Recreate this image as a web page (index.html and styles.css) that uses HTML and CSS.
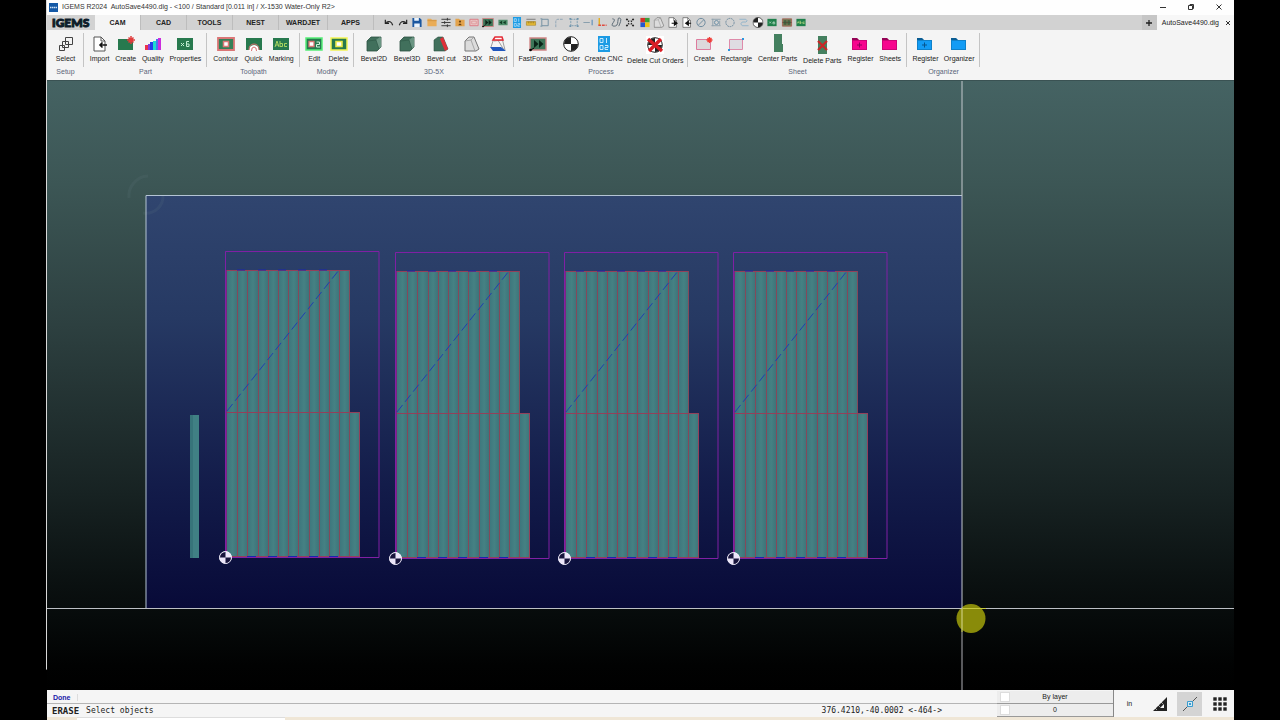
FILE: index.html
```html
<!DOCTYPE html>
<html lang="en">
<head>
<meta charset="utf-8">
<title>IGEMS R2024</title>
<link rel="stylesheet" href="styles.css">
</head>
<body>
<svg class="defs" width="0" height="0" aria-hidden="true">
  <defs>
    <symbol id="folder" viewBox="0 0 18 16"><path d="M1 2h5l2 2h8v10H1z" fill="currentColor"/><path d="M1 4V2h5l2 2z" fill="#000" opacity=".4"/><path d="M1.5 4.5h14v9h-14z" fill="none" stroke="#000" stroke-opacity=".25" stroke-width=".7"/></symbol>
    <symbol id="order" viewBox="0 0 16 16"><circle cx="8" cy="8" r="7.3" fill="#fff" stroke="#222" stroke-width="1"/><path d="M8 8V1a7 7 0 0 0-7 7zM8 8v7a7 7 0 0 0 7-7z" fill="#222"/></symbol>
    <symbol id="bevel" viewBox="0 0 16 16"><path d="M1 5l4-4h10v10l-4 4H1z" fill="#41705c" stroke="#2b5042" stroke-width=".8"/><path d="M10 4l4-3 1 1v9l-2 2z" fill="#6a9582"/><path d="M2 5l8-1 3 9" fill="none" stroke="#2f5948" stroke-width=".7"/></symbol>
    <symbol id="solid" viewBox="0 0 16 16"><path d="M1 5l4-4h5l5 12-3 2H1z" fill="#dcdcdc" stroke="#777" stroke-width="1"/><path d="M10 1L7 4l4 11M1 5l6-1" fill="none" stroke="#999" stroke-width=".8"/></symbol>
    <symbol id="ff" viewBox="0 0 18 16"><path d="M1 2h16v12H1z" fill="#3d7558" stroke="#d08787" stroke-width="1.4"/><path d="M5 4l4.500 4L5 12zM10 4l4.500 4L10 12z" fill="#0b2418"/><circle cx="1.500" cy="14" r="1.300" fill="#000"/><path d="M2 14l3-2" stroke="#000"/></symbol>
    <symbol id="cnc" viewBox="0 0 12 16"><path d="M0 0h12v16H0z" fill="#1c9be4"/><path d="M2 2.500h3v4H2zM8.500 2v5M2 9.500h3v4H2zM7 9.500h3v2H7v2h3" fill="none" stroke="#d9f1ff" stroke-width=".9"/></symbol>
    <symbol id="page" viewBox="0 0 14 16"><path d="M1 1h7l4 4v10H1z" fill="#fff" stroke="#555"/><path d="M8 1v4h4" fill="none" stroke="#555"/></symbol>
    <linearGradient id="slat" gradientUnits="userSpaceOnUse" x1="227" x2="237.200" y1="0" y2="0" spreadMethod="repeat"><stop offset="0" stop-color="#3c757c"/><stop offset=".55" stop-color="#458183"/><stop offset="1" stop-color="#3e747a"/></linearGradient>
    <linearGradient id="sheet" x1="0" y1="0" x2="0" y2="1"><stop offset="0" stop-color="#30456f"/><stop offset=".3" stop-color="#263963"/><stop offset=".7" stop-color="#131c4a"/><stop offset="1" stop-color="#080a38"/></linearGradient>
    <g id="datum"><circle cx="225.500" cy="557.500" r="6" fill="#ece6fa" stroke="#f5f2ff"/><path d="M225.500 557.500v-5.500a5.500 5.500 0 0 0-5.500 5.500zM225.500 557.500v5.500a5.500 5.500 0 0 0 5.500-5.500z" fill="#17143c"/></g>
    <g id="part" fill="none">
      <path d="M227 270h122v143h11v144H227z" fill="url(#slat)"/>
      <path d="M237.500 270v287M247.500 270v287M258.500 270v287M268.500 270v287M278.500 270v287M288.500 270v287M298.500 270v287M309.500 270v287M319.500 270v287M329.500 270v287M339.500 270v287M349.500 270v287" stroke="#84495a"/>
      <path d="M227 270.500h122M227 412.500h133M359.500 413v144M227 556.500h133" stroke="#93405a"/>
      <path d="M237 270h8M258 270h8M278 270h8M298 270h8M319 270h8M247 556.500h9M268 556.500h9M288 556.500h9M309 556.500h9M329 556.500h9" stroke="#1b25b0"/>
      <path d="M225.500 251.500h153.500v306h-153.500z" stroke="#8020a4"/>
      <path d="M226.500 270v287" stroke="#7b257f"/>
      <path d="M227 411L339 270" stroke="#203fb0" stroke-dasharray="9 4"/>
    </g>
  </defs>
</svg>
<div class="app">
  <header class="titlebar">
    <svg class="logo-mark" viewBox="0 0 9 9"><path d="M0 0h9v9H0z" fill="#1559a6"/><path d="M1 4.500h7" stroke="#cfe2f5" stroke-width="1.500" stroke-dasharray="1.500 .5"/></svg>
    <h1 class="title">IGEMS R2024&nbsp; AutoSave4490.dig - &lt;100 / Standard [0.011 in] / X-1530 Water-Only R2&gt;</h1>
    <div class="window-controls">
      <button aria-label="Minimize"><svg viewBox="0 0 8 8"><path d="M1 4.500h6"/></svg></button>
      <button aria-label="Restore"><svg viewBox="0 0 8 8"><path d="M1.500 2.500h4v4h-4zM3 2.500v-1h3.500v4h-1"/></svg></button>
      <button aria-label="Close"><svg viewBox="0 0 8 8"><path d="M1.500 1.500l5 5M6.500 1.500l-5 5"/></svg></button>
    </div>
  </header>

  <nav class="tabbar">
    <span class="brand">IGEMS</span>
    <button class="tab tab-active">CAM</button><button class="tab">CAD</button><button class="tab">TOOLS</button><button class="tab">NEST</button><button class="tab tab-wide">WARDJET</button><button class="tab">APPS</button>
    <div class="quickbar">
      <button aria-label="Undo"><svg viewBox="0 0 12 12"><path d="M3 6c3-2 6-1 7 3M2 3v4h4" fill="none" stroke="#222" stroke-width="1.300"/></svg></button>
      <button aria-label="Redo"><svg viewBox="0 0 12 12"><path d="M9 6C6 4 3 5 2 9M10 3v4H6" fill="none" stroke="#222" stroke-width="1.300"/></svg></button>
      <button aria-label="Save"><svg viewBox="0 0 12 12"><path d="M1 1h8l2 2v8H1z" fill="#1a57a0"/><path d="M3 1h5v3H3zM3 7h6v4H3z" fill="#e9f2fb"/></svg></button>
      <button aria-label="Open"><svg viewBox="0 0 12 12"><path d="M1 2h4l1 1h5v7H1z" fill="#e9ac57"/><path d="M1 4h10" stroke="#c98b38" stroke-width=".7"/></svg></button>
      <button aria-label="Settings"><svg viewBox="0 0 12 12"><path d="M1 2.500h10M1 6h10M1 9.500h10M7.500 1v3M4.500 4.500v3M7.500 8v3" stroke="#333"/></svg></button>
      <button aria-label="User folder"><svg viewBox="0 0 12 12"><path d="M1 2h4l1 1h5v7H1z" fill="#e3a34c"/><circle cx="6" cy="5" r="1.200" fill="#6b4310"/><path d="M4 9q2-4 4 0z" fill="#6b4310"/></svg></button>
      <button aria-label="Plate"><svg viewBox="0 0 12 12"><path d="M1.500 2.500h9v7h-9z" fill="#eccaca" stroke="#dc7781"/><path d="M3.500 4.500h5v3h-5z" fill="none" stroke="#d99"/></svg></button>
      <button aria-label="Fast forward"><svg viewBox="0 0 18 16"><use href="#ff"/></svg></button>
      <button aria-label="Rewind"><svg viewBox="0 0 12 12"><path d="M1 3h10v6H1z" fill="#4d8c69"/><path d="M5 4L2 6l3 2zM9 4L6 6l3 2z" fill="#103a22"/></svg></button>
      <button aria-label="CNC"><svg viewBox="0 0 12 16"><use href="#cnc"/></svg></button>
      <button aria-label="Measure"><svg viewBox="0 0 12 12"><path d="M1 2.500h10" stroke="#777"/><path d="M1 5h10v4H1z" fill="#e9bd37" stroke="#a88422" stroke-width=".7"/><path d="M3 5v2M5 5v2M7 5v2M9 5v2" stroke="#765c14" stroke-width=".7"/></svg></button>
      <button aria-label="Rectangle"><svg viewBox="0 0 12 12"><path d="M2.500 2.500h7v7h-7zM1 2h2M1 10h2" fill="none" stroke="#6e8ca0"/></svg></button>
      <button aria-label="Corner"><svg viewBox="0 0 12 12"><path d="M2.500 11V5q0-2.500 2.500-2.500h6" fill="none" stroke="#8ba2b5" stroke-dasharray="3 1"/></svg></button>
      <button aria-label="Group"><svg viewBox="0 0 12 12"><path d="M2.500 2.500h7v7h-7z" fill="none" stroke="#7799ae" stroke-dasharray="2 1"/><path d="M1 1h2v2H1zM9 1h2v2H9zM1 9h2v2H1zM9 9h2v2H9z" fill="#6d93ab"/></svg></button>
      <button aria-label="Extend"><svg viewBox="0 0 12 12"><path d="M1 6h7" stroke="#829aaa"/><path d="M10.500 3v6" stroke="#4380b4"/></svg></button>
      <button aria-label="Origin"><svg viewBox="0 0 12 12"><path d="M3 1v8" stroke="#e6ac17" stroke-width="1.500"/><path d="M2 9h9" stroke="#df4b3f" stroke-width="1.500" stroke-dasharray="3 1"/></svg></button>
      <button aria-label="Spline"><svg viewBox="0 0 12 12"><path d="M2 2q4 0 1 4t1 4 4-5 2-4 1 4-2 5" fill="none" stroke="#53636e"/></svg></button>
      <button aria-label="Zoom extents"><svg viewBox="0 0 12 12"><path d="M2 2l3 3M10 2L7 5M2 10l3-3M10 10L7 7" stroke="#222" stroke-width="1.800" stroke-dasharray="2 1"/></svg></button>
      <button aria-label="Colors"><svg viewBox="0 0 12 12"><path d="M1 1h5v5H1z" fill="#d23128"/><path d="M6 1h5v5H6z" fill="#3b9f38"/><path d="M1 6h5v5H1z" fill="#2458cf"/><path d="M6 6h5v5H6z" fill="#f0c21a"/></svg></button>
      <button aria-label="Solid"><svg viewBox="0 0 16 16"><use href="#solid"/></svg></button>
      <button aria-label="Export"><svg viewBox="0 0 14 16"><use href="#page"/><path d="M5 9h6M9 6l4 3-4 3z" stroke="#111" stroke-width="1.500"/></svg></button>
      <button aria-label="Import page"><svg viewBox="0 0 14 16"><use href="#page"/><path d="M7 9h6M9 6L5 9l4 3z" stroke="#111" stroke-width="1.500"/></svg></button>
      <button aria-label="Circle slash"><svg viewBox="0 0 12 12"><circle cx="6" cy="6" r="4.500" fill="none" stroke="#69879b"/><path d="M3 9l6-6" stroke="#69879b"/></svg></button>
      <button aria-label="Snapshot"><svg viewBox="0 0 12 12"><path d="M1 2.500h10M1 9.500h10M2.500 2v8M10 4v5" stroke="#8b9fab"/><circle cx="6.500" cy="6" r="2.200" fill="none" stroke="#698da4"/></svg></button>
      <button aria-label="Circle"><svg viewBox="0 0 12 12"><circle cx="6" cy="6" r="4.500" fill="none" stroke="#69879b" stroke-dasharray="2 .7"/></svg></button>
      <button aria-label="Path"><svg viewBox="0 0 12 12"><path d="M1 2.500h7q3 2 0 3H4q-3 2 0 4h7" fill="none" stroke="#8fb2c9"/></svg></button>
      <button aria-label="Cut order"><svg viewBox="0 0 16 16"><use href="#order"/></svg></button>
      <button aria-label="Part properties"><svg viewBox="0 0 12 12"><path d="M1 2h10v8H1z" fill="#1f804b"/><path d="M3 5l2 2M5 5L3 7M8.500 4.500L7 6v1.500h2V6H7" fill="none" stroke="#b7dbc4" stroke-width=".8"/></svg></button>
      <button aria-label="Edit path"><svg viewBox="0 0 12 12"><path d="M1 2h10v8H1z" fill="#6f7e56" stroke="#a66556"/><path d="M3 4h2v4H3zM7 4h2v4H7zM1 6h10" fill="#367b4d" stroke="#4c4033" stroke-width=".6"/></svg></button>
      <button aria-label="Mark"><svg viewBox="0 0 12 12"><path d="M1 2h10v8H1z" fill="#1f804b"/><path d="M2 7l1-2 1 2M5 4v3h1V5.500H5M10 5.500H8V7h2" fill="none" stroke="#c0db84" stroke-width=".8"/></svg></button>
    </div>
    <div class="documents">
      <button class="new-doc" aria-label="New document"><svg viewBox="0 0 8 8"><path d="M4 1v6M1 4h6" stroke="#222" stroke-width="1.300"/></svg></button>
      <div class="doc-tab"><span>AutoSave4490.dig</span><button aria-label="Close document"><svg viewBox="0 0 8 8"><path d="M2 2l4 4M6 2L2 6"/></svg></button></div>
    </div>
  </nav>

  <div class="ribbon">
    <section class="group g-setup"><div class="tools">
      <button class="tool"><svg viewBox="0 0 16 16"><path d="M7.500 1.500h7v7h-7zM4.500 5.500h6v6h-6zM1.500 9.500h5v5h-5z" fill="#f4f4f4" stroke="#444"/></svg>Select</button>
    </div><h2>Setup</h2></section>
    <section class="group g-part"><div class="tools">
      <button class="tool"><svg viewBox="0 0 14 16"><use href="#page"/><path d="M8 9h6M9.500 6.500L7 9l2.500 2.500" fill="none" stroke="#111" stroke-width="1.600"/></svg>Import</button>
      <button class="tool"><svg viewBox="0 0 18 16"><path d="M1 3h15v11H1z" fill="#27794e"/><path d="M14 0v8M10 4h8M11.500 1.500l5 5M16.500 1.500l-5 5" stroke="#e03b3b" stroke-width="1.500"/></svg>Create</button>
      <button class="tool"><svg viewBox="0 0 18 16"><path d="M1 9h3v5H1z" fill="#ec334c"/><path d="M4 8h2v6H4z" fill="#803ce0"/><path d="M6 6h3v8H6z" fill="#233bea"/><path d="M9 5h3v9H9z" fill="#1bdccf"/><path d="M12 3h2v11h-2z" fill="#4778ee"/><path d="M14 2h3v12h-3z" fill="#cb2ddd"/></svg>Quality</button>
      <button class="tool"><svg viewBox="0 0 18 16"><path d="M1 2h16v12H1z" fill="#27794e"/><path d="M5 7l3 3M8 7l-3 3M13 5.500h-2.500v5H13V8h-2.500" fill="none" stroke="#c2efd3"/></svg>Properties</button>
    </div><h2>Part</h2></section>
    <section class="group g-toolpath"><div class="tools">
      <button class="tool"><svg viewBox="0 0 18 16"><path d="M1 2h16v12H1z" fill="#348058" stroke="#da7676" stroke-width="1.800"/><path d="M6.500 5.500h5v5h-5z" fill="#fff" stroke="#dd7777" stroke-width="1.500"/></svg>Contour</button>
      <button class="tool"><svg viewBox="0 0 18 16"><path d="M1 2h16v12H1z" fill="#27794e"/><path d="M4 15q0-6 5-6t5 6z" fill="#fff"/><path d="M4 14q0-6 5-6t5 6M6.500 15q0-4 2.500-4t2.500 4" fill="none" stroke="#d76e6e"/></svg>Quick</button>
      <button class="tool"><svg viewBox="0 0 18 16"><path d="M1 2h16v12H1z" fill="#27794e"/><path d="M3 11l2-6 2 6M4 9h2M8 5v5.500h2.500v-3H8M15 7.500h-2.500v3H15" fill="none" stroke="#a7d45f"/></svg>Marking</button>
    </div><h2>Toolpath</h2></section>
    <section class="group g-modify"><div class="tools">
      <button class="tool"><svg viewBox="0 0 18 16"><path d="M1 2h16v12H1z" fill="#27794e" stroke="#55ed77" stroke-width="1.500"/><path d="M4 5.500h5v5H4z" fill="#fff" stroke="#db7676" stroke-width="1.300"/><path d="M11.500 6h3v2.500h-3v2.500h3.500" fill="none" stroke="#d2f2dd"/></svg>Edit</button>
      <button class="tool"><svg viewBox="0 0 18 16"><path d="M1 2h16v12H1z" fill="#27794e" stroke="#f2f454" stroke-width="1.500"/><path d="M6 5.500h6v5H6z" fill="#fff" stroke="#ece949" stroke-width="1.600"/></svg>Delete</button>
    </div><h2>Modify</h2></section>
    <section class="group g-bevel"><div class="tools">
      <button class="tool"><svg viewBox="0 0 16 16"><use href="#bevel"/></svg>Bevel2D</button>
      <button class="tool"><svg viewBox="0 0 16 16"><use href="#bevel"/></svg>Bevel3D</button>
      <button class="tool"><svg viewBox="0 0 16 16"><path d="M1 4l4-3h5l5 12-3 2H1z" fill="#41705c" stroke="#2b5042" stroke-width=".6"/><path d="M7 3l3-2 5 12-3 2z" fill="#df3038"/></svg>Bevel cut</button>
      <button class="tool"><svg viewBox="0 0 16 16"><use href="#solid"/></svg>3D-5X</button>
      <button class="tool"><svg viewBox="0 0 16 16"><path d="M4 2L1 11M12 2l3 12M4 5l9-1M6 1l8 13" stroke="#777" stroke-width=".7"/><path d="M3 4l2-3h7l1 3z" fill="#fff" stroke="#e32a35" stroke-width="1.500"/><path d="M0 11h11l5 4H3z" fill="#2157bd"/></svg>Ruled</button>
    </div><h2>3D-5X</h2></section>
    <section class="group g-process"><div class="tools">
      <button class="tool"><svg viewBox="0 0 18 16"><use href="#ff"/></svg>FastForward</button>
      <button class="tool"><svg viewBox="0 0 16 16"><use href="#order"/></svg>Order</button>
      <button class="tool"><svg viewBox="0 0 12 16"><use href="#cnc"/></svg>Create CNC</button>
      <button class="tool tool-tall"><svg viewBox="0 0 18 18"><path d="M0 0h18v18H0z" fill="#fff"/><use href="#order" x="1" y="1" width="16" height="16"/><path d="M2 3l14 12M15 3L3 15" stroke="#d91f26" stroke-width="3.500"/></svg>Delete Cut Orders</button>
    </div><h2>Process</h2></section>
    <section class="group g-sheet"><div class="tools">
      <button class="tool"><svg viewBox="0 0 18 16"><path d="M1.500 3.500h14v10h-14z" fill="#ddd9dc" stroke="#de7b9d"/><path d="M14.500 1v6M11.500 4h6M12.500 2l4 4M16.500 2l-4 4" stroke="#f03e37" stroke-width="1.300"/></svg>Create</button>
      <button class="tool"><svg viewBox="0 0 18 16"><path d="M2.500 3.500h13v10h-13z" fill="#dfdce2" stroke="#de8baa"/><path d="M15 2h2v2h-2zM1 13h2v2H1z" fill="#2a97df"/></svg>Rectangle</button>
      <button class="tool tool-center"><svg viewBox="0 0 18 18"><path d="M5 0h8v10h1v8H5z" fill="#44805f"/></svg>Center Parts</button>
      <button class="tool tool-tall"><svg viewBox="0 0 18 18"><path d="M5 0h9v18H5z" fill="#44805f"/><path d="M5 5l9 9M14 5l-9 9" stroke="#c92626" stroke-width="2.200"/></svg>Delete Parts</button>
      <button class="tool pink"><svg viewBox="0 0 18 16"><use href="#folder"/><path d="M6 9h5M8.500 6.500v5" stroke="#8d005d"/></svg>Register</button>
      <button class="tool pink"><svg viewBox="0 0 18 16"><use href="#folder"/></svg>Sheets</button>
    </div><h2>Sheet</h2></section>
    <section class="group g-organizer"><div class="tools">
      <button class="tool blue"><svg viewBox="0 0 18 16"><use href="#folder"/><path d="M6 9h5M8.500 6.500v5" stroke="#07558d"/></svg>Register</button>
      <button class="tool blue"><svg viewBox="0 0 18 16"><use href="#folder"/></svg>Organizer</button>
    </div><h2>Organizer</h2></section>
  </div>

  <main class="canvas">
    <svg viewBox="47 81 1187 609" preserveAspectRatio="xMidYMid slice" role="img" aria-label="Sheet with four nested parts">
      <path d="M146 195h816v413H146z" fill="url(#sheet)"/>
      <g fill="none" stroke="#6e8588" opacity=".13" stroke-width="3"><path d="M129 198a20 20 0 0 1 19-22M163 195a17 17 0 0 1-20 18"/></g>
      <path d="M146 608V195.500H962" fill="none" stroke="#b4c4d4"/>
      <path d="M190 415h9v143h-9z" fill="#408084"/><path d="M190 415h3v143h-3z" fill="#37747a"/>
      <use href="#part"/><use href="#part" x="170" y="1"/><use href="#part" x="339" y="1"/><use href="#part" x="508" y="1"/>
      <use href="#datum"/><use href="#datum" x="170" y="1"/><use href="#datum" x="339" y="1"/><use href="#datum" x="508" y="1"/>
      <circle cx="971" cy="618.500" r="14.500" fill="#898b0a"/>
      <path d="M47 608.500h1187" stroke="#bcbfc4"/><path d="M962 81v527" stroke="#c4c9ce"/><path d="M962 608v82" stroke="#b0b0b6"/><path d="M962 609v23M962 608.500h24" stroke="#c5c83d"/>
    </svg>
  </main>

  <footer class="status">
    <div class="console">
      <div class="message"><span>Done</span></div>
      <div class="command"><b>ERASE</b><label for="command">Select objects</label><input id="command" type="text"><output>376.4210,-40.0002 &lt;-464-&gt;</output></div>
    </div>
    <div class="layers">
      <button><i></i><span>By layer</span></button>
      <button><i></i><span>0</span></button>
    </div>
    <div class="modes">
      <button>in</button>
      <button aria-label="Angle"><svg viewBox="0 0 16 16"><path d="M1 15L15 1v14zM8 12h4V8z" fill="#222" fill-rule="evenodd"/><path d="M3 12l2 2M6 9l2 2M9 6l2 2" stroke="#f4f4f4" stroke-width=".6"/></svg></button>
      <button class="mode-on" aria-label="Object snap"><svg viewBox="0 0 16 16"><path d="M1 15L15 1" stroke="#555"/><path d="M5.500 5.500h5v5h-5z" fill="#d5e8f2" stroke="#3a9dd0"/><path d="M7 7h2v2H7z" fill="#3a9dd0"/></svg></button>
      <button aria-label="Grid"><svg viewBox="0 0 16 16"><path d="M1 1h4v4H1zM6 1h4v4H6zM11 1h4v4h-4zM1 6h4v4H1zM6 6h4v4H6zM11 6h4v4h-4zM1 11h4v4H1zM6 11h4v4H6zM11 11h4v4h-4z" fill="#222" stroke="#f4f4f4" stroke-width=".6"/></svg></button>
    </div>
  </footer>
  <div class="taskbar"><div class="task"></div></div>
</div>
</body>
</html>
```
FILE: styles.css
```css
* { box-sizing: border-box; }
body {
  margin: 0;
  background: #000;
  color: #222;
  font: 7px/10px "Liberation Sans", Arial, sans-serif;
}
button, input {
  margin: 0;
  padding: 0;
  border: 0;
  background: none;
  color: inherit;
  font: inherit;
}
h1, h2 { margin: 0; font: inherit; }
.defs { position: absolute; }
.app {
  display: flex;
  flex-direction: column;
  height: 100vh;
  margin: 0 46px;
  padding-left: 1px;
  background: linear-gradient(#d8d8d8, #d8d8d8) no-repeat 0 0 / 1px 93%;
}

.titlebar {
  display: flex;
  align-items: center;
  flex: 0 0 15px;
  padding: 0 9px 1px 2px;
  gap: 4px;
  background: #fefefe;
}
.logo-mark { width: 9px; height: 9px; }
.title { flex: 1; color: #333; white-space: nowrap; }
.window-controls { display: flex; gap: 16px; }
.window-controls button { width: 12px; height: 10px; display: grid; place-items: center; }
.window-controls svg, .doc-tab svg { width: 8px; height: 8px; fill: none; stroke: #333; }

.tabbar {
  display: flex;
  align-items: stretch;
  flex: 0 0 15px;
  background: #d2d2d2;
}
.brand {
  width: 48px;
  padding-left: 5px;
  color: #0e1c2a;
  font: 900 12px/15px "Lato", "Liberation Sans", sans-serif;
  -webkit-text-stroke: 1px #0e1c2a;
}
.tab {
  width: 46px;
  padding-top: 1px;
  border-right: 1px solid #bdbdbd;
  font-weight: bold;
}
.tab-wide { width: 49px; }
.tab-active { background: #f4f4f4; }
.quickbar {
  display: flex;
  align-items: center;
  justify-content: space-between;
  flex: 0 0 424px;
  margin-left: 9px;
}
.quickbar button { width: 12px; height: 12px; }
.quickbar svg { display: block; width: 12px; height: 11px; }
.documents { display: flex; margin-left: auto; }
.new-doc {
  display: grid;
  place-items: center;
  width: 15px;
  background: #c6c6c6;
}
.new-doc svg { width: 8px; height: 8px; }
.doc-tab {
  display: flex;
  align-items: center;
  gap: 5px;
  padding: 0 2px 0 5px;
  background: #f7f7f7;
}
.doc-tab button { width: 8px; height: 8px; }
.doc-tab svg { display: block; }

.ribbon {
  display: flex;
  flex: 0 0 51px;
  padding-top: 3px;
  border-bottom: 1px solid #3a5253;
  background: #f4f4f4;
}
.group {
  display: flex;
  flex-direction: column;
  align-items: center;
  height: 44px;
  background: linear-gradient(#c4c4c4, #c4c4c4) no-repeat 100% 0 / 1px 34px;
}
.group h2 { color: #596479; }
.g-setup { width: 37px; }
.g-part { width: 123px; }
.g-toolpath { width: 93px; }
.g-modify { width: 54px; }
.g-bevel { width: 160px; }
.g-process { width: 174px; }
.g-sheet { width: 219px; }
.g-organizer { width: 73px; }
.tools {
  display: flex;
  justify-content: space-evenly;
  align-self: stretch;
  height: 34px;
}
.tool {
  display: flex;
  flex-direction: column;
  align-items: center;
  padding-top: 3px;
  gap: 2px;
  white-space: nowrap;
}
.tool svg { width: 18px; height: 16px; }
.tool-tall svg { height: 18px; }
.tool-center { padding-top: 1px; }
.tool-center svg { height: 18px; }
.pink svg { color: #f7058e; }
.blue svg { color: #139cf5; }

.canvas {
  flex: 1;
  min-height: 0;
  background: linear-gradient(#456363, #3c5655 17%, #2d4040 40%, #172222 68%, #0a1010 83%, #010202 96%, #000);
}
.canvas svg { display: block; width: 100%; height: 100%; }

.status {
  display: flex;
  flex: 0 0 27px;
  background: #f5f5f5;
}
.console { flex: 1; display: flex; flex-direction: column; }
.message {
  flex: 0 0 14px;
  padding: 3px 6px 0;
  border-bottom: 1px solid #b5b5b5;
  color: #2020a8;
  font-weight: bold;
}
.message span { padding-right: 6px; border-right: 1px solid #ddd; }
.command {
  display: flex;
  align-items: center;
  flex: 1;
  gap: 7px;
  padding: 0 55px 0 5px;
  font: 8px/12px "DejaVu Sans Mono", monospace;
}
.command b { font-size: 9px; }
.command input { flex: 1; min-width: 0; outline: 0; }
.layers {
  display: flex;
  flex-direction: column;
  flex: 0 0 117px;
  padding-top: 1px;
  border-right: 1px solid #888;
}
.layers button {
  display: flex;
  align-items: center;
  flex: 1;
  padding: 0 13px 0 3px;
  border-bottom: 1px solid #999;
  background: #ededed;
}
.layers i { width: 10px; height: 10px; border: 1px solid #ddd; background: #fff; }
.layers span { flex: 1; }
.modes { display: flex; align-items: center; gap: 5px; padding: 1px 2px 1px 3px; }
.modes button { width: 25px; height: 24px; display: grid; place-items: center; }
.modes svg { width: 16px; height: 16px; }
.mode-on { background: #d4d4d4; }
.taskbar { flex: 0 0 3px; padding: 0 0 0 30px; background: #efe6d6; }
.task { width: 18%; height: 3px; background: #fff; border-top: 1px solid #ddd; }
```
